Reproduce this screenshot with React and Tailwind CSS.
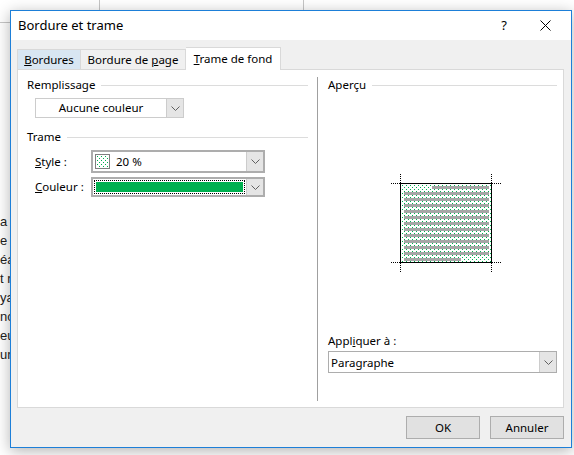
import { useState } from "react";

function Chevron() {
    return (
        <svg width="9" height="5" viewBox="0 0 9 5" className="block">
            <path d="M0.5 0.5 L4.5 4.5 L8.5 0.5" fill="none" stroke="#606060" strokeWidth="1" />
        </svg>
    );
}

function DotPattern({ id }) {
    return (
        <pattern id={id} width="4" height="4" patternUnits="userSpaceOnUse">
            <rect x="0" y="0" width="1" height="1" fill="#00b050" />
            <rect x="2" y="2" width="1" height="1" fill="#00b050" />
        </pattern>
    );
}

function Preview() {
    // box 92x80, with 10px of room around for the corner ticks
    const lines = [];
    for (let i = 0; i < 13; i++) {
        const y = 10 + 3 + i * 6;
        const x1 = i === 0 ? 10 + 32 : 10 + 4;
        const x2 = i === 12 ? 10 + 61 : 10 + 89;
        lines.push(<rect key={i} x={x1} y={y} width={x2 - x1} height="3" fill="#a6a6a6" />);
    }
    return (
        <svg width="112" height="100" viewBox="0 0 112 100" className="block">
            <defs>
                <DotPattern id="pv" />
            </defs>
            <rect x="10" y="10" width="92" height="80" fill="url(#pv)" />
            {lines}
            <rect x="10.5" y="10.5" width="91" height="79" fill="none" stroke="#000" strokeWidth="1" />
            <g stroke="#000" strokeWidth="1" strokeDasharray="1 1">
                <path d="M1 10.5 H10 M10.5 1 V10" />
                <path d="M102 10.5 H111 M101.5 1 V10" />
                <path d="M1 89.5 H10 M10.5 90 V99" />
                <path d="M102 89.5 H111 M101.5 90 V99" />
            </g>
        </svg>
    );
}

function GroupTitle({ children, className = "" }) {
    return (
        <div className={`flex items-center gap-[6px] h-[16px] ${className}`}>
            <span className="whitespace-nowrap">{children}</span>
            <div className="flex-1 h-px bg-[#dcdcdc]" />
        </div>
    );
}

export default function App() {
    const [tab] = useState("trame");

    return (
        <div className="relative w-[574px] h-[455px] bg-white overflow-hidden font-['Noto_Sans',sans-serif] text-[11.5px] text-black">
            {/* document behind the dialog */}
            <div className="absolute left-[99px] top-0 w-px h-[10px] bg-[#c6c6c6]" />
            <div className="absolute left-[303px] top-0 w-px h-[10px] bg-[#c6c6c6]" />
            <div className="absolute left-0 top-[22px] w-[10px] h-px bg-[#c6c6c6]" />
            <div className="absolute left-0 top-[212px] flex flex-col leading-[19px] text-[13px] font-['Liberation_Sans',sans-serif] text-[#222]">
                <span>a la</span>
                <span>e d</span>
                <span>éal</span>
                <span>t ré</span>
                <span>yan</span>
                <span>nce</span>
                <span>eur</span>
                <span>ur s</span>
            </div>

            {/* dialog */}
            <div className="absolute left-[10px] top-[10px] w-[562px] h-[438px] border border-[#1d7fd8] bg-[#f0f0f0] shadow-[0_3px_14px_rgba(0,0,0,0.3)] flex flex-col">
                <div className="h-[29px] bg-white flex items-center pl-[7px] pr-[20px] shrink-0">
                    <span className="text-[13px] flex-1">Bordure et trame</span>
                    <span className="text-[13px] mr-[33px]">?</span>
                    <svg width="11" height="11" viewBox="0 0 11 11">
                        <path d="M0.5 0.5 L10.5 10.5 M10.5 0.5 L0.5 10.5" stroke="#000" strokeWidth="1" />
                    </svg>
                </div>

                <div className="flex-1 flex flex-col pl-[6px] pr-[7px] pt-[7px]">
                    <div className="flex items-end h-[22px] relative z-10">
                        <div className="w-[64px] h-[20px] flex items-center justify-center bg-[#d8e6f2] border border-b-0 border-[#d9d9d9]">
                            <span><span className="underline">B</span>ordures</span>
                        </div>
                        <div className="w-[105px] h-[20px] flex items-center justify-center border border-b-0 border-l-0 border-[#d9d9d9]">
                            <span>Bordure de <span className="underline">p</span>age</span>
                        </div>
                        <div className={`w-[95px] h-[23px] -mb-px flex items-center justify-center bg-white border border-b-0 border-l-0 border-[#d9d9d9] ${tab === "trame" ? "" : ""}`}>
                            <span><span className="underline">T</span>rame de fond</span>
                        </div>
                    </div>

                    <div className="h-[339px] bg-white border border-[#d9d9d9] flex">
                        {/* left column */}
                        <div className="w-[299px] flex flex-col pt-[7px] pl-[9px] pr-[9px]">
                            <GroupTitle>Remplissage</GroupTitle>
                            <div className="ml-[8px] mt-[5px] w-[149px] h-[20px] flex border border-[#cccccc]">
                                <div className="flex-1 flex items-center justify-center">Aucune couleur</div>
                                <div className="w-[17px] bg-[#e5e5e5] border-l border-[#cccccc] flex items-center justify-center">
                                    <Chevron />
                                </div>
                            </div>
                            <GroupTitle className="mt-[11px]">Trame</GroupTitle>
                            <div className="mt-[5px] ml-[8px] flex items-center">
                                <span className="w-[56px]"><span className="underline">S</span>tyle :</span>
                                <div className="w-[174px] h-[23px] flex border-2 border-[#adadad]">
                                    <div className="flex-1 flex items-center pl-[2px] gap-[6px]">
                                        <svg width="15" height="15" viewBox="0 0 15 15" className="block">
                                            <defs>
                                                <DotPattern id="sw" />
                                            </defs>
                                            <rect x="0.5" y="0.5" width="14" height="14" fill="url(#sw)" stroke="#808080" />
                                        </svg>
                                        <span>20 %</span>
                                    </div>
                                    <div className="w-[17px] bg-[#e5e5e5] border-l border-[#cccccc] flex items-center justify-center">
                                        <Chevron />
                                    </div>
                                </div>
                            </div>
                            <div className="mt-[4px] ml-[8px] flex items-center">
                                <span className="w-[56px]"><span className="underline">C</span>ouleur :</span>
                                <div className="w-[174px] h-[20px] flex border-2 border-[#adadad]">
                                    <div className="flex-1 flex p-px">
                                        <div className="flex-1 border border-dotted border-black p-px">
                                            <div className="w-full h-full bg-[#00b050]" />
                                        </div>
                                    </div>
                                    <div className="w-[17px] bg-[#e5e5e5] border-l border-[#cccccc] flex items-center justify-center">
                                        <Chevron />
                                    </div>
                                </div>
                            </div>
                        </div>

                        <div className="w-px bg-[#a0a0a0] mt-[7px] mb-[6px]" />

                        {/* right column */}
                        <div className="flex-1 flex flex-col pt-[7px] pl-[10px] pr-[6px]">
                            <GroupTitle>Aperçu</GroupTitle>
                            <div className="mt-[80px] ml-[62px]">
                                <Preview />
                            </div>
                            <div className="mt-[59px]">Appl<span className="underline">i</span>quer à :</div>
                            <div className="mt-[2px] h-[22px] flex border border-[#adadad]">
                                <div className="flex-1 flex items-center pl-[2px]">Paragraphe</div>
                                <div className="w-[17px] bg-[#e5e5e5] border-l border-[#cccccc] flex items-center justify-center">
                                    <Chevron />
                                </div>
                            </div>
                        </div>
                    </div>

                    <div className="flex justify-end gap-[10px] mt-[8px]">
                        <button className="w-[74px] h-[23px] bg-[#e1e1e1] border border-[#adadad]">OK</button>
                        <button className="w-[74px] h-[23px] bg-[#e1e1e1] border border-[#adadad]">Annuler</button>
                    </div>
                </div>
            </div>
        </div>
    );
}
